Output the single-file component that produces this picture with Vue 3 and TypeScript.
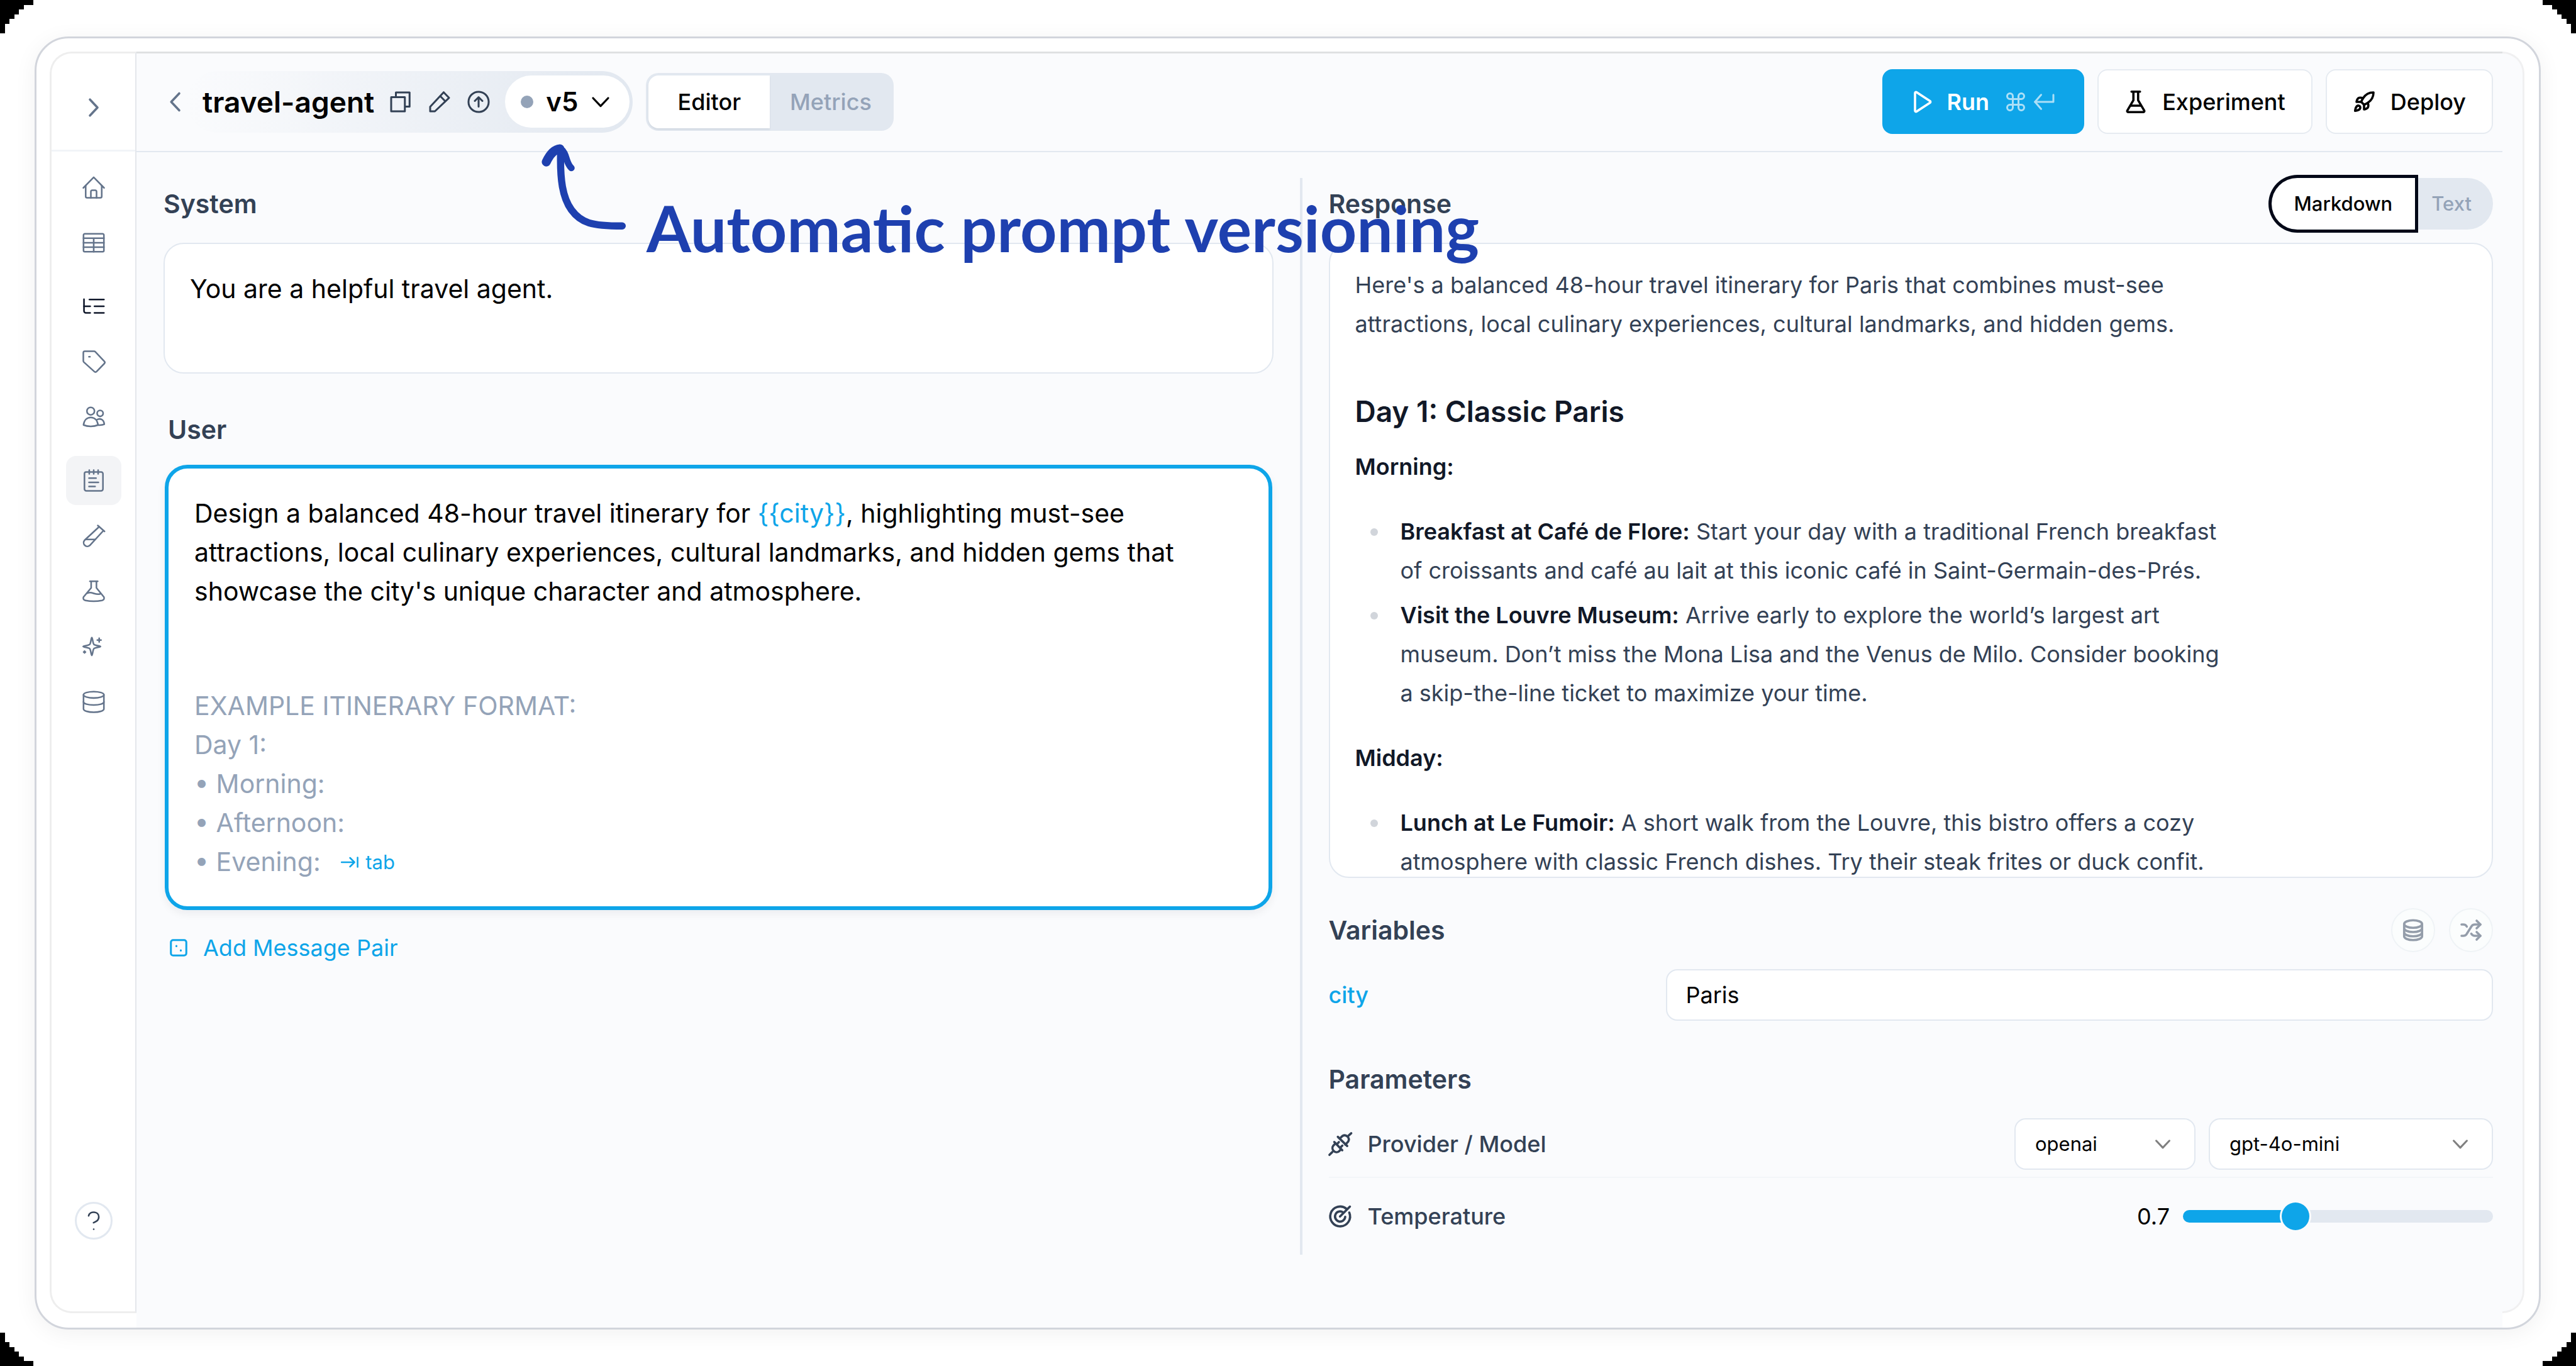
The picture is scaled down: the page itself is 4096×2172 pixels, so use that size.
<script setup lang="ts">
import { computed, ref } from 'vue'

const icons: Record<string, string[]> = {
  chevronRight: ['M8 3.500l8 8.500-8 8.500'],
  chevronLeft: ['M16 3l-8.500 9 8.500 9'],
  chevronDown: ['M3 7.500l9 9.500 9-9.500'],
  home: ['M1 12.500L12 1.200 23 12.500', 'M3.500 10v11.500a1.500 1.500 0 0 0 1.500 1.500h14a1.500 1.500 0 0 0 1.500-1.500V10', 'M9 23v-6.500a1.500 1.500 0 0 1 1.500-1.500h3a1.500 1.500 0 0 1 1.500 1.500V23'],
  table: ['M2.500 2.500h19a1.300 1.300 0 0 1 1.300 1.300v16.400a1.300 1.300 0 0 1-1.300 1.300h-19a1.300 1.300 0 0 1-1.300-1.300V3.800a1.300 1.300 0 0 1 1.300-1.300z', 'M1.200 7.200h21.600M1.200 12h21.600M1.200 16.700h21.600M12 7.200v14.300'],
  tree: ['M1.700 4.500v12.500a2 2 0 0 0 2 2h4.600', 'M1.700 12h6.600', 'M7.500 4.800h15.300', 'M12.800 12h10', 'M12.800 19h10'],
  tag: ['M2.500 1h9.800a2 2 0 0 1 1.400.6l9.600 10.200a1.600 1.600 0 0 1 0 2.200l-8.300 8.600a1.600 1.600 0 0 1-2.300 0L1.600 12.600a2 2 0 0 1-.6-1.400V2.500A1.500 1.500 0 0 1 2.500 1z', 'M7 6.800h1'],
  users: ['M8.800 1.800a4 4 0 1 0 0 8a4 4 0 1 0 0-8z', 'M1.200 20.500c.6-5 3.600-8 7.700-8s7 3 7.700 8c-4.500 2-11 2-15.400 0z', 'M18.800 5a3.200 3.200 0 1 0 0 6.400a3.200 3.200 0 1 0 0-6.400z', 'M15.200 15c3.500-2 7.600-.6 8 4.800-1.600.9-3.600 1-6.600.8'],
  notepad: ['M4 3h16a1.800 1.800 0 0 1 1.800 1.800V21a2 2 0 0 1-2 2H4.200a2 2 0 0 1-2-2V4.800A1.800 1.800 0 0 1 4 3z', 'M7.300 1v4M12 1v4M16.700 1v4', 'M7 9.500h7.500M7 14h10M7 18.300h6.500'],
  tube: ['M16.300 1l7.200 6.300', 'M17.800 2.300L2.300 16.700a3.900 3.900 0 0 0 5.500 5.500L22.300 6.500', 'M4 15.800h9.500'],
  flask: ['M8 1.500h8.200', 'M9.300 1.500v7L1.200 18.200c-.8 1.800.2 3.200 2 3.600 5 1 12.500 1 17.600 0 1.800-.4 2.800-1.800 2-3.600L14.900 8.500v-7', 'M5 14.200c3.500-1.500 5-.5 7.500.3s4.500 1 6.500.3'],
  sparkle: ['M10 2.500c.8 0 1 6 2.200 7.300s7 1.500 7 2.200-5.800 1-7 2.200-1.400 7.300-2.200 7.300-1-6-2.200-7.300-7-1.500-7-2.200 5.800-1 7-2.200 1.400-7.300 2.200-7.300z', 'M17.800 3.200v4M15.800 5.200h4', 'M2.300 16.800v2M1.300 17.800h2'],
  database: ['M1.200 4.500a10.800 3.400 0 1 0 21.600 0a10.800 3.400 0 1 0-21.600 0', 'M1.200 4.500v15c0 2 4.800 3.500 10.800 3.500s10.800-1.500 10.800-3.500v-15', 'M1.200 12c0 2 4.800 3.300 10.800 3.300s10.800-1.300 10.800-3.300'],
  help: ['M6.600 6.800c1.200-5.500 10.800-5 10.800 1 0 4-3 5.200-5.600 6.300', 'M12 21v.01'],
  copy: ['M2 7h14.500v15H2z', 'M7 6.500V2h14.500v15H17'],
  pencil: ['M2 22v-4.800L16.300 1.800 22 7.700 7 22z', 'M12.800 6l5.200 5.300'],
  circleUp: ['M12 1.300a10.700 10.700 0 1 0 0 21.400a10.700 10.700 0 1 0 0-21.400z', 'M12 17V7.500M8 11l4-4 4 4'],
  play: ['M4 2.500v19a1 1 0 0 0 1.500.8l14.500-9.500a1 1 0 0 0 0-1.600L5.500 1.700A1 1 0 0 0 4 2.500z'],
  command: ['M15 6v12a3 3 0 1 0 3-3H6a3 3 0 1 0 3 3V6a3 3 0 1 0-3 3h12a3 3 0 1 0-3-3'],
  enter: ['M22 4.500V12H2.500', 'M9 4.500L2.500 12 9 19.500'],
  beaker: ['M7.500 1.200h9', 'M9.500 1.200v9L3 21.300a1 1 0 0 0 1 1.500h16a1 1 0 0 0 1-1.500L14.500 10.200v-9', 'M6.500 16h11'],
  rocket: ['M4.500 16.500c-1.500 1.260-2 5-2 5s3.740-.5 5-2c.71-.84.7-2.130-.09-2.910a2.180 2.180 0 0 0-2.910-.09z', 'M12 15l-3-3a22 22 0 0 1 2-3.950A12.880 12.880 0 0 1 22 2c0 2.720-.78 7.500-6 11a22.350 22.350 0 0 1-4 2z', 'M9 12H4s.55-3.030 2-4c1.620-1.080 5 0 5 0', 'M12 15v5s3.030-.55 4-2c1.080-1.620 0-5 0-5'],
  dice: ['M4.500 1.500h15a3 3 0 0 1 3 3v15a3 3 0 0 1-3 3h-15a3 3 0 0 1-3-3v-15a3 3 0 0 1 3-3z', 'M9 9.500v.4M15 15.500v.4'],
  tab: ['M1 12h17', 'M12.500 6l6 6-6 6', 'M22.800 5.500v13'],
  plug: ['M9.500 4.400l9.900 9.700', 'M11.500 6.200l3-2.800a4.400 4.400 0 0 1 6 6l-3 3.300', 'M20.700 3.300L23.700.6', 'M5.700 9.900l8.500 8.700', 'M7 11.400l-2.200 2.200a4.300 4.300 0 0 0 6 6.100l2.200-2.200', 'M3.600 20.600L.6 23.500', 'M8.300 12.300l2.300-2.300', 'M12 16l2.300-2.300'],
  target: ['M18.600 4A10.500 10.500 0 1 0 21.600 8', 'M14.800 7.600A5.400 5.400 0 1 0 17.300 12.500', 'M11.800 12.200L22.300 1.700'],
  disks: ['M2.500 5.500a9.500 4 0 1 0 19 0a9.500 4 0 1 0-19 0', 'M2.500 5.500v13c0 2.200 4.200 4 9.500 4s9.500-1.800 9.500-4v-13', 'M2.500 10c0 2.200 4.200 4 9.500 4s9.500-1.800 9.500-4', 'M2.500 14.500c0 2.200 4.200 4 9.500 4s9.500-1.800 9.500-4'],
  shuffle: ['m18 14 4 4-4 4', 'm18 2 4 4-4 4', 'M2 18h1.970a4 4 0 0 0 3.300-1.700l5.450-8.600a4 4 0 0 1 3.300-1.700H22', 'M2 6h1.970a4 4 0 0 1 3.600 2.200', 'M22 18h-6.040a4 4 0 0 1-3.300-1.800l-.36-.45'],
}

const navGroups = [
  [{ id: 'home', label: 'Home' }, { id: 'table', label: 'Dashboard' }],
  [{ id: 'tree', label: 'Traces' }, { id: 'tag', label: 'Annotations' }, { id: 'users', label: 'Users' }],
  [
    { id: 'notepad', label: 'Prompts' },
    { id: 'tube', label: 'Evaluators' },
    { id: 'flask', label: 'Experiments' },
    { id: 'sparkle', label: 'Optimize' },
    { id: 'database', label: 'Datasets' },
  ],
]

const activeNav = 'notepad'
const systemPrompt = ref('You are a helpful travel agent.')
const cityToken = '{{city}}'
const city = ref('Paris')
const provider = ref('openai')
const model = ref('gpt-4o-mini')
const temperature = ref(0.7)

const THUMB = 44
const fillWidth = computed(() => {
  const ratio = temperature.value / 2
  return `calc(${THUMB / 2}px + (100% - ${THUMB}px) * ${ratio})`
})

const corner = 'M0 0H56V8H40V16H32V24H24V32H16V40H8V56H0Z'
const corners = ['tl', 'tr', 'bl', 'br']
</script>

<template>
  <div class="page">
    <svg v-for="c in corners" :key="c" :class="['corner', c]" viewBox="0 0 56 56" shape-rendering="crispEdges" aria-hidden="true">
      <path :d="corner" />
    </svg>

    <div class="frame">
      <aside class="sidebar">
        <div class="side-head">
          <button class="icon-btn" type="button" aria-label="Expand sidebar">
            <svg class="ico bold" viewBox="0 0 24 24"><path v-for="d in icons.chevronRight" :key="d" :d="d" /></svg>
          </button>
        </div>
        <nav class="nav" aria-label="Main">
          <div v-for="(group, g) in navGroups" :key="g" class="nav-group">
            <a v-for="item in group" :key="item.id" href="#" :aria-label="item.label" :class="['nav-item', item.id, { active: item.id === activeNav }]">
              <svg class="ico" viewBox="0 0 24 24"><path v-for="d in icons[item.id]" :key="d" :d="d" /></svg>
            </a>
          </div>
        </nav>
        <button class="help" type="button" aria-label="Help">
          <svg class="ico" viewBox="0 0 24 24"><path v-for="d in icons.help" :key="d" :d="d" /></svg>
        </button>
      </aside>

      <main class="main">
        <header class="header">
          <button class="icon-btn back" type="button" aria-label="Back">
            <svg class="ico bold" viewBox="0 0 24 24"><path v-for="d in icons.chevronLeft" :key="d" :d="d" /></svg>
          </button>
          <div class="title-pill">
            <h1>travel-agent</h1>
            <div class="title-tools">
              <button v-for="n in ['copy', 'pencil', 'circleUp']" :key="n" class="icon-btn dark" type="button" :aria-label="n">
                <svg class="ico mid" viewBox="0 0 24 24"><path v-for="d in icons[n]" :key="d" :d="d" /></svg>
              </button>
            </div>
            <button class="version" type="button">
              <span class="dot"></span>
              <span>v5</span>
              <svg class="ico small bold" viewBox="0 0 24 24"><path v-for="d in icons.chevronDown" :key="d" :d="d" /></svg>
            </button>
          </div>
          <div class="segmented">
            <button class="on" type="button">Editor</button>
            <button type="button">Metrics</button>
          </div>
          <div class="actions">
            <button class="btn primary" type="button">
              <svg class="ico bold" viewBox="0 0 24 24"><path v-for="d in icons.play" :key="d" :d="d" /></svg>
              <span>Run</span>
              <span class="keys">
                <svg class="ico mid" viewBox="0 0 24 24"><path v-for="d in icons.command" :key="d" :d="d" /></svg>
                <svg class="ico mid" viewBox="0 0 24 24"><path v-for="d in icons.enter" :key="d" :d="d" /></svg>
              </span>
            </button>
            <button class="btn" type="button">
              <svg class="ico bold" viewBox="0 0 24 24"><path v-for="d in icons.beaker" :key="d" :d="d" /></svg>
              <span>Experiment</span>
            </button>
            <button class="btn" type="button">
              <svg class="ico bold" viewBox="0 0 24 24"><path v-for="d in icons.rocket" :key="d" :d="d" /></svg>
              <span>Deploy</span>
            </button>
          </div>
        </header>

        <div class="body">
          <section class="col">
            <div class="row"><h2 id="system-title">System</h2></div>
            <textarea v-model="systemPrompt" class="card system" aria-labelledby="system-title" spellcheck="false"></textarea>

            <div class="user">
              <div class="row"><h2 id="user-title">User</h2></div>
              <div class="prompt" role="textbox" aria-multiline="true" aria-labelledby="user-title" contenteditable="true" spellcheck="false">
                <p>
                  Design a balanced 48-hour travel itinerary for <span class="token">{{ cityToken }}</span>, highlighting must-see<br />
                  attractions, local culinary experiences, cultural landmarks, and hidden gems that<br />
                  showcase the city's unique character and atmosphere.
                </p>
                <p class="ghost">
                  EXAMPLE ITINERARY FORMAT:<br />
                  Day 1:<br />
                  • Morning:<br />
                  • Afternoon:<br />
                  • Evening:
                  <span class="tab-hint">
                    <svg class="ico tiny" viewBox="0 0 24 24"><path v-for="d in icons.tab" :key="d" :d="d" /></svg>tab
                  </span>
                </p>
              </div>
              <button class="add" type="button">
                <svg class="ico tiny" viewBox="0 0 24 24"><path v-for="d in icons.dice" :key="d" :d="d" /></svg>
                Add Message Pair
              </button>
            </div>
          </section>

          <div class="divider"></div>

          <section class="col">
            <div class="row">
              <h2>Response</h2>
              <div class="format">
                <button class="on" type="button">Markdown</button>
                <button type="button">Text</button>
              </div>
            </div>
            <div class="card response">
              <article>
                <p>Here's a balanced 48-hour travel itinerary for Paris that combines must-see attractions, local culinary experiences, cultural landmarks, and hidden gems.</p>
                <h3>Day 1: Classic Paris</h3>
                <p><strong>Morning:</strong></p>
                <ul>
                  <li><strong>Breakfast at Café de Flore:</strong> Start your day with a traditional French breakfast of croissants and café au lait at this iconic café in Saint-Germain-des-Prés.</li>
                  <li><strong>Visit the Louvre Museum:</strong> Arrive early to explore the world’s largest art museum. Don’t miss the Mona Lisa and the Venus de Milo. Consider booking a skip-the-line ticket to maximize your time.</li>
                </ul>
                <p><strong>Midday:</strong></p>
                <ul>
                  <li><strong>Lunch at Le Fumoir:</strong> A short walk from the Louvre, this bistro offers a cozy atmosphere with classic French dishes. Try their steak frites or duck confit.</li>
                </ul>
              </article>
            </div>

            <div class="row variables">
              <h2>Variables</h2>
              <div class="round-btns">
                <button type="button" aria-label="Load from dataset">
                  <svg class="ico bold" viewBox="0 0 24 24"><path v-for="d in icons.disks" :key="d" :d="d" /></svg>
                </button>
                <button type="button" aria-label="Shuffle">
                  <svg class="ico bold" viewBox="0 0 24 24"><path v-for="d in icons.shuffle" :key="d" :d="d" /></svg>
                </button>
              </div>
            </div>
            <div class="variable">
              <label for="var-city">city</label>
              <input id="var-city" v-model="city" type="text" />
            </div>

            <h2 class="params-title">Parameters</h2>
            <div class="param first">
              <label for="provider">
                <svg class="ico bold" viewBox="0 0 24 24"><path v-for="d in icons.plug" :key="d" :d="d" /></svg>
                Provider / Model
              </label>
              <div class="selects">
                <div class="select provider">
                  <select id="provider" v-model="provider"><option>openai</option></select>
                  <svg class="ico" viewBox="0 0 24 24"><path v-for="d in icons.chevronDown" :key="d" :d="d" /></svg>
                </div>
                <div class="select model">
                  <select v-model="model" aria-label="Model"><option>gpt-4o-mini</option></select>
                  <svg class="ico" viewBox="0 0 24 24"><path v-for="d in icons.chevronDown" :key="d" :d="d" /></svg>
                </div>
              </div>
            </div>
            <div class="param">
              <label for="temperature">
                <svg class="ico bold" viewBox="0 0 24 24"><path v-for="d in icons.target" :key="d" :d="d" /></svg>
                Temperature
              </label>
              <div class="slider">
                <output for="temperature">{{ temperature }}</output>
                <input id="temperature" v-model.number="temperature" type="range" min="0" max="2" step="0.1" :style="{ '--fill': fillWidth }" />
              </div>
            </div>
          </section>
        </div>
      </main>

      <div class="edge"></div>
    </div>

    <div class="callout">
      <svg viewBox="906 242 142 143" aria-hidden="true">
        <path class="shaft" d="M938 256C937 300 941 330 956 351C972 373 990 378 1041 378" />
        <path class="barb-left" d="M914 271C920 258 927 250 937 249" />
        <path class="barb-right" d="M938 249C949 256 946 272 956 281" />
      </svg>
      <span>Automatic prompt versioning</span>
    </div>
  </div>
</template>

<style>
body {
  background: #fff;
}
</style>

<style scoped>
* {
  box-sizing: border-box;
}
.page {
  position: relative;
  display: flex;
  min-height: 100vh;
  padding: 58px 56px 58px 55px;
  background: #fff;
  color: #000;
  font-family: Inter, 'Liberation Sans', sans-serif;
  font-size: 36px;
  line-height: 62px;
}
h1, h2, h3, p, ul {
  margin: 0;
}
button, input, select, textarea {
  margin: 0;
  padding: 0;
  border: 0;
  background: none;
  color: inherit;
  font: inherit;
}
.corner {
  position: absolute;
  width: 53px;
  height: 53px;
}
.tl { top: 0; left: 0; }
.tr { top: 0; right: 0; transform: scaleX(-1); }
.bl { bottom: 0; left: 0; transform: scaleY(-1); }
.br { bottom: 0; right: 0; transform: scale(-1); }

.ico {
  flex: none;
  width: 36px;
  height: 36px;
  overflow: visible;
  fill: none;
  stroke: currentColor;
  stroke-width: 1.7;
  stroke-linecap: round;
  stroke-linejoin: round;
}
.ico.mid { stroke-width: 2; }
.ico.bold { stroke-width: 2.4; }
.ico.small { width: 32px; height: 32px; }
.ico.tiny { width: 28px; height: 28px; stroke-width: 2.2; }
.icon-btn {
  display: flex;
  color: #64748b;
}
.icon-btn.dark { color: #334155; }

.frame {
  display: flex;
  flex: 1;
  min-width: 0;
  padding: 21px 23px 0 21px;
  overflow: hidden;
  border: 3px solid #d2d5dc;
  border-radius: 54px;
  box-shadow: 0 6px 36px rgba(0, 0, 0, 0.06);
}
.sidebar {
  display: flex;
  flex: none;
  flex-direction: column;
  align-items: center;
  width: 138px;
  margin-bottom: 23px;
  border: 3px solid #eee;
  border-right: 2px solid #e4e7ec;
  border-radius: 35px 0 0 35px;
}
.side-head {
  display: flex;
  align-items: center;
  justify-content: center;
  align-self: stretch;
  height: 156px;
  padding-top: 18px;
  border-bottom: 3px solid #f1f4f8;
}
.nav {
  display: flex;
  flex: 1;
  flex-direction: column;
  gap: 23px;
  padding-top: 18px;
}
.nav-group {
  display: flex;
  flex-direction: column;
  gap: 10px;
}
.nav-item {
  display: flex;
  align-items: center;
  justify-content: center;
  width: 88px;
  height: 78px;
  border-radius: 16px;
  color: #64748b;
}
.nav-item.tree { color: #0f172a; }
.nav-item.active { background: #f3f4f6; }
.help {
  display: flex;
  align-items: center;
  justify-content: center;
  width: 60px;
  height: 60px;
  margin-bottom: 114px;
  border: 3px solid #e2e8f0;
  border-radius: 50%;
  color: #334155;
}

.main {
  flex: 1;
  min-width: 0;
  border-top: 3px solid #dfe1e2;
  background: #fafbfd;
}
.edge {
  flex: none;
  width: 35px;
  margin-bottom: 23px;
  border: 3px solid #f0f0f1;
  border-left: 0;
  border-radius: 0 35px 35px 0;
  background: #fafbfd;
}

.header {
  display: flex;
  align-items: center;
  height: 157px;
  padding: 0 15px 2px 44px;
  border-bottom: 2px solid #e2e8f0;
}
.title-pill {
  display: flex;
  align-items: center;
  height: 98px;
  margin-right: 21px;
  padding: 0 5px 0 25px;
  border-radius: 49px;
  background: linear-gradient(90deg, #fafbfd, #e2e8f0);
}
h1 {
  font-size: 46px;
  font-weight: 600;
}
.title-tools {
  display: flex;
  gap: 26px;
  margin: 0 24px;
}
.version {
  display: flex;
  align-items: center;
  height: 83px;
  padding: 0 30px 0 25px;
  gap: 20px;
  border-radius: 42px;
  background: #fff;
  font-size: 42px;
  font-weight: 600;
}
.dot {
  width: 20px;
  height: 20px;
  border-radius: 50%;
  background: #94a3b8;
}
.segmented {
  display: flex;
  height: 92px;
  padding: 4px;
  border-radius: 20px;
  background: #e2e8f0;
}
.segmented button {
  width: 193px;
  color: #94a3b8;
  font-weight: 500;
}
.segmented .on {
  border-radius: 16px 0 0 16px;
  background: #fff;
  box-shadow: 0 2px 3px rgba(15, 23, 42, 0.08);
  color: #000;
}
.actions {
  display: flex;
  gap: 21px;
  margin-left: auto;
}
.btn {
  display: flex;
  align-items: center;
  height: 103px;
  padding: 0 41px;
  gap: 24px;
  border: 2px solid #e6ebf1;
  border-radius: 16px;
  background: #fff;
  font-weight: 500;
}
.btn.primary {
  padding: 0 44px;
  gap: 21px;
  border-color: #0ea5e9;
  background: #0ea5e9;
  color: #fff;
  font-weight: 600;
}
.keys {
  display: flex;
  gap: 9px;
  margin-left: 3px;
  opacity: 0.65;
}

.body {
  display: grid;
  grid-template-columns: minmax(0, 1765fr) 4px minmax(0, 1852fr);
  column-gap: 42px;
  padding: 41px 15px 0 43px;
}
.divider {
  background: #e2e8f0;
}
.col {
  display: flex;
  flex-direction: column;
}
.row {
  display: flex;
  align-items: center;
  justify-content: space-between;
  height: 82px;
}
h2 {
  color: #334155;
  font-size: 41px;
  font-weight: 600;
  line-height: 50px;
}
.card {
  display: block;
  margin-top: 21px;
  border: 2px solid #e2e8f0;
  border-radius: 32px;
  background: #fff;
}
.system {
  height: 208px;
  padding: 40px;
  resize: none;
  outline: none;
  font-size: 41px;
}
.user {
  margin: 48px 2px 0;
}
.user h2 {
  padding-left: 5px;
}
.prompt {
  margin-top: 15px;
  padding: 40px 41px;
  border: 6px solid #0ea5e9;
  border-radius: 36px;
  outline: none;
  background: #fff;
  box-shadow: 0 6px 14px rgba(15, 23, 42, 0.06);
  font-size: 41px;
}
.token { color: #0ea5e9; }
.ghost {
  margin-top: 120px;
  color: #94a3b8;
}
.tab-hint {
  display: inline-flex;
  align-items: center;
  margin-left: 21px;
  gap: 11px;
  color: #0ea5e9;
  font-size: 31px;
  line-height: 40px;
}
.add {
  display: flex;
  align-items: center;
  margin-top: 39px;
  padding-left: 8px;
  gap: 25px;
  color: #0ea5e9;
  line-height: 42px;
}
.add .ico { stroke-width: 2.6; }

.format {
  display: flex;
  height: 82px;
  border-radius: 41px;
  background: #e2e8f0;
  font-size: 31px;
  font-weight: 500;
}
.format button {
  padding: 0 34px 0 26px;
  color: #94a3b8;
}
.format .on {
  padding: 0 36px;
  border-radius: 41px 0 0 41px;
  background: #fff;
  box-shadow: 0 0 0 5px #020817;
  color: #000;
}
.response {
  height: 1010px;
  padding: 34px 40px 0;
  overflow: hidden;
  color: #334155;
}
.response article {
  max-width: 1390px;
}
.response strong {
  color: #111827;
  font-weight: 600;
}
.response h3 {
  margin: 77px 0 26px;
  color: #111827;
  font-size: 46px;
  font-weight: 600;
}
.response ul {
  margin: 41px 0;
  padding: 0;
  list-style: none;
}
.response li {
  position: relative;
  padding-left: 72px;
}
.response li + li {
  margin-top: 9px;
}
.response li::before {
  position: absolute;
  top: 26px;
  left: 24px;
  width: 12px;
  height: 12px;
  border-radius: 50%;
  background: #d1d5db;
  content: '';
}

.variables {
  height: 70px;
  margin-top: 48px;
}
.round-btns {
  display: flex;
  gap: 22px;
}
.round-btns button {
  display: flex;
  align-items: center;
  justify-content: center;
  width: 70px;
  height: 70px;
  border: 2px solid #eff3f6;
  border-radius: 50%;
  background: #fbfdfd;
  color: #949daa;
}
.variable {
  display: grid;
  grid-template-columns: 29fr 71fr;
  align-items: center;
  margin-top: 27px;
}
.variable label {
  color: #0ea5e9;
  font-weight: 500;
}
.variable input {
  min-width: 0;
  height: 82px;
  padding: 0 29px;
  border: 2px solid #e2e8f0;
  border-radius: 18px;
  background: #fff;
}
.params-title {
  margin: 68px 0 25px;
}
.param {
  display: flex;
  align-items: center;
  justify-content: space-between;
  height: 122px;
}
.param.first {
  height: 107px;
  border-bottom: 2px solid #f3f6f9;
}
.param label {
  display: flex;
  align-items: center;
  gap: 26px;
  color: #334155;
  font-weight: 500;
}
.selects {
  display: flex;
  gap: 21px;
}
.select {
  display: grid;
  align-items: center;
}
.select select,
.select svg {
  grid-area: 1 / 1;
}
.select select {
  height: 82px;
  padding: 0 31px;
  border: 2px solid #e2e8f0;
  border-radius: 18px;
  appearance: none;
  background: #fff;
  font-size: 31px;
  line-height: 40px;
}
.select svg {
  justify-self: end;
  width: 28px;
  height: 28px;
  margin-right: 38px;
  stroke-width: 2.6;
  color: #808080;
  pointer-events: none;
}
.provider { width: 288px; }
.model { width: 452px; }
.slider {
  display: flex;
  align-items: center;
  gap: 21px;
}
.slider input {
  width: 493px;
  height: 20px;
  border-radius: 10px;
  appearance: none;
  background: linear-gradient(#0ea5e9, #0ea5e9) 0 0 / var(--fill) 100% no-repeat #e2e8f0;
}
.slider input::-webkit-slider-thumb {
  width: 44px;
  height: 44px;
  border-radius: 50%;
  appearance: none;
  background: #0ea5e9;
  box-shadow: 0 0 0 3px #fafbfd;
}

.callout {
  position: absolute;
  top: 230px;
  left: 861px;
  display: flex;
  gap: 32px;
  color: #1e40af;
  pointer-events: none;
}
.callout svg {
  width: 135px;
  height: 136px;
  overflow: visible;
  fill: none;
  stroke: currentColor;
  stroke-width: 12;
  stroke-linecap: round;
  stroke-linejoin: round;
}
.callout .barb-left { stroke-width: 15; }
.callout .barb-right { stroke-width: 11; }
.callout span {
  margin-top: 64px;
  font-family: Lato, 'Liberation Sans', sans-serif;
  font-size: 102px;
  font-weight: 700;
  line-height: 136px;
  white-space: nowrap;
}
</style>
